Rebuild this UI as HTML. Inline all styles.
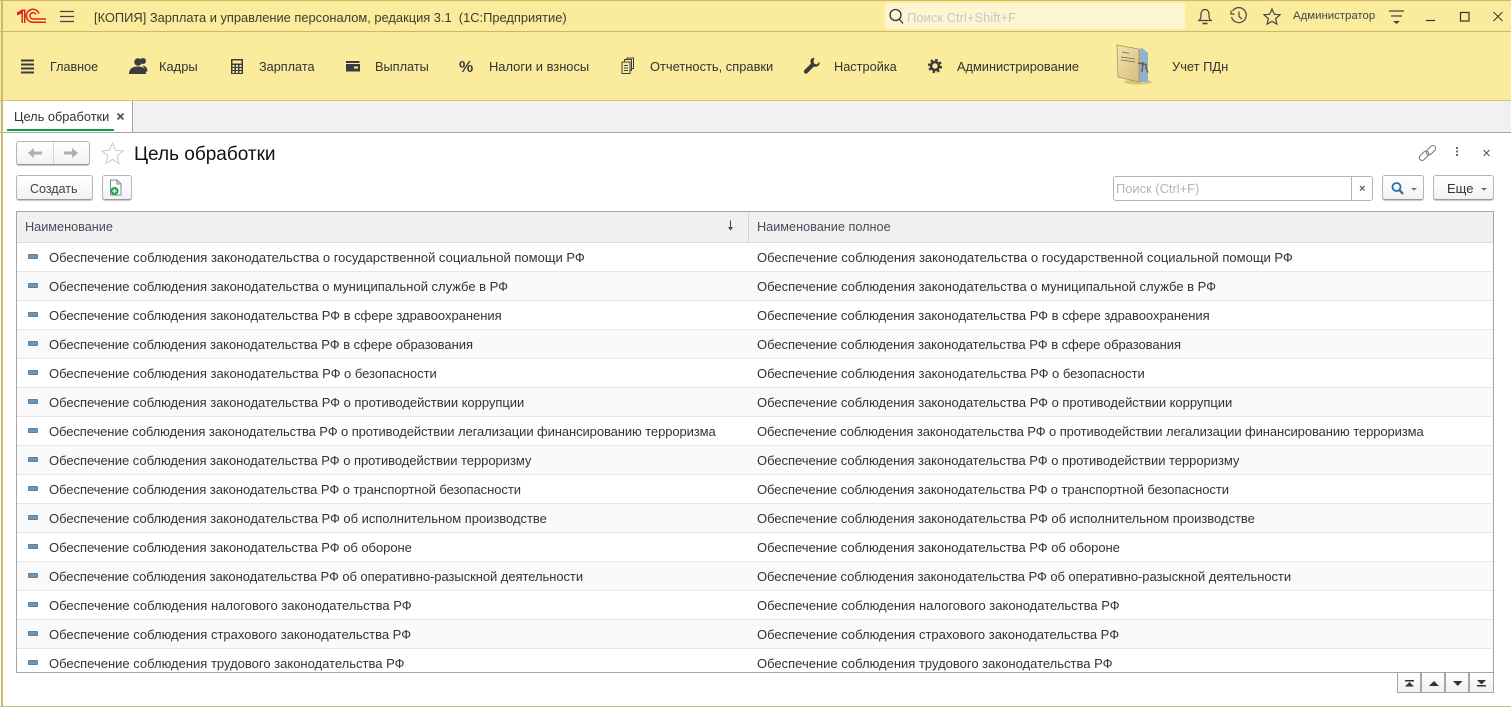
<!DOCTYPE html>
<html lang="ru"><head><meta charset="utf-8"><title>Цель обработки</title>
<style>
*{box-sizing:border-box}
html,body{margin:0;padding:0}
body{width:1511px;height:707px;position:relative;overflow:hidden;background:#fff;font-family:"Liberation Sans",sans-serif;font-size:13px;color:#333}
.a{position:absolute}
.t{position:absolute;white-space:nowrap;line-height:16px;height:16px}
svg{position:absolute;overflow:visible}
.btn{position:absolute;background:linear-gradient(#fff,#f2f2f2);border:1px solid #b5b5b5;border-bottom-color:#999;border-radius:3px;box-shadow:0 1px 0 #ccc}
.row{position:absolute;left:17px;width:1476px;height:29px;border-bottom:1px solid #e6e6e6}
.row.e{background:#fafafa}
.row i{position:absolute;left:11px;top:11px;width:10px;height:5px;background:#6d95b5;border:1px solid #5f7f9c;border-radius:1px}
.row span{position:absolute;top:7px;line-height:16px;white-space:nowrap;color:#333}
.row .c1{left:32px}.row .c2{left:740px}
.nav{position:absolute;top:59px;line-height:16px;white-space:nowrap;color:#333;font-size:12.9px}
.pg{position:absolute;top:672px;height:21px;width:24px;background:linear-gradient(#fff,#f0f0f0);border:1px solid #a5a5a5}
</style></head><body>
<!-- Top -->
<div class="a" style="left:0;top:0;width:1511px;height:32px;background:#fbeb9d;border-top:1px solid #c9bb6a;border-bottom:1px solid #c9bb6a"></div>
<div class="a" style="left:0;top:32px;width:1511px;height:69px;background:#fbeb9d;border-bottom:1px solid #d4c67c"></div>
<div class="a" style="left:0;top:101px;width:1511px;height:32px;background:#f1f1f1;border-bottom:1px solid #a5a5a5"></div>
<div class="a" style="left:1px;top:0;width:2px;height:707px;background:#c9bb6a;z-index:5"></div>
<div class="a" style="left:0;top:706px;width:1511px;height:1px;background:#c9bb6a;z-index:5"></div>
<!-- 1C logo -->
<svg style="left:0;top:0" width="50" height="30" fill="none" stroke="#d8261c">
<path d="M17 12.500L22 9.500H25.500V23H21.500V13.500L17 15.500z" fill="#d8261c" stroke="none"/>
<path d="M23.500 11V23" stroke="#fbeb9d" stroke-width="1"/>
<path d="M46 22.300H33A6.500 6.500 0 1 1 39 13.500" stroke-width="1.500"/>
<path d="M46 19H33A3.200 3.200 0 1 1 36 14.500" stroke-width="1.500"/>
</svg>
<!-- burger -->
<svg style="left:0;top:0" width="80" height="30" stroke="#444" stroke-width="1.200"><path d="M60 11.500H74M60 16.500H74M60 21.500H74"/></svg>
<div class="t" style="left:94px;top:10px;color:#3d3d2e;font-size:12.870px">[КОПИЯ] Зарплата и управление персоналом, редакция 3.1&nbsp; (1С:Предприятие)</div>
<!-- search -->
<div class="a" style="left:885px;top:3px;width:300px;height:26px;background:#fdf6d2;border-radius:3px"></div>
<svg style="left:0;top:0" width="910" height="30" fill="none" stroke="#333" stroke-width="1.300"><circle cx="895.500" cy="15" r="5.500"/><path d="M899.500 19.500L903 23.500"/></svg>
<div class="t" style="left:907px;top:10px;color:#c8c8c8;font-size:13px">Поиск Ctrl+Shift+F</div>
<!-- right tools -->
<svg style="left:0;top:0" width="1511" height="32" fill="none" stroke="#444" stroke-width="1.200">
<path d="M1198 20.500h14M1199.500 20c1.500-1.500 1.500-3 1.500-5.500 0-3 1.500-5 4-5s4 2 4 5c0 2.500 0 4 1.500 5.500"/><path d="M1202.500 23.500h5" stroke-width="1.600"/>
<path d="M1232.500 11a7.500 7.500 0 1 1-1 6" /><path d="M1231 10.500v3.500h3.500M1239 11.500v5l3 2.500"/>
<path d="M1272 9l2.300 5.200 5.700.6-4.300 3.800 1.200 5.600-4.900-2.900-4.900 2.900 1.200-5.600-4.300-3.800 5.700-.6z"/>
<path d="M1389 11h15M1391 16h11"/>
<path d="M1393 21h7l-3.500 3z" fill="#444" stroke="none"/>
<path d="M1426 20.500h9" stroke="#333"/>
<rect x="1460.500" y="12.500" width="8.500" height="8.500" stroke="#333"/>
<path d="M1493.500 12l9 9M1502.500 12l-9 9" stroke="#444"/>
</svg>
<div class="t" style="left:1293px;top:8px;font-size:11.400px;color:#3d4a4a">Администратор</div>
<!-- nav icons -->
<svg style="left:0;top:33px" width="1100" height="68" fill="#3c3c3c">
<path d="M21 27.500h13v2H21zM21 31.500h13v2H21zM21 35.500h13v2H21zM21 39.500h13v2H21z" transform="translate(0 -1)"/>
<circle cx="138" cy="29" r="3.800"/><circle cx="143" cy="28" r="3"/>
<path d="M129 41c0-5 3-7.500 9-7.500s8 2.500 8 7.500zM142 32.500c3 0 5.500 2 5.500 6h-2c-.5-3-1.500-4.500-3.500-6z"/>
<path fill-rule="evenodd" d="M231 27h12v15h-12zM232.500 28.500v3h9v-3zM232.500 33v2h2v-2zM236 33v2h2v-2zM239.500 33v2h2v-2zM232.500 36v2h2v-2zM236 36v2h2v-2zM239.500 36v2h2v-2zM232.500 39v2h2v-2zM236 39v2h2v-2zM239.500 39v2h2v-2z" transform="translate(0 -1)"/>
<path fill-rule="evenodd" d="M346 29h13.500v2H346zM346 32h14v7.500h-14zM354 34.500v2h4v-2z" transform="translate(0 -1)"/>
<path d="M811 26c-2.500-.5-4.500 1.500-4 4l.5 1.500-6.500 6.500c-.8 1-.8 2 0 3s2 1 3 0l6.500-6.500c3 1 6-1 5.500-4.500l-3 2.500-2.500-1 -.5-2.500z" transform="translate(3.500 -1)"/>
<g fill="none" stroke="#3c3c3c"><circle cx="935" cy="33" r="6" stroke-width="2.200" stroke-dasharray="2.400 2.312"/><circle cx="935" cy="33" r="4" stroke-width="2.600"/></g>
<g fill="none" stroke="#3c3c3c" stroke-width="1" transform="translate(0 -1.500)"><path d="M622 30.500h8v11.500h-8zM624.500 30v-2h7v11h-1.500M627 28v-1.500h6.500V37h-2M624 34h4M624 36.500h4M624 39h4"/></g>
</svg>
<div class="t" style="left:459px;top:59px;font-size:16px;font-weight:bold;color:#3c3c3c;height:18px;line-height:18px">%</div>
<div class="nav" style="left:50px;font-size:12.600px">Главное</div>
<div class="nav" style="left:159px">Кадры</div>
<div class="nav" style="left:259px;font-size:12.700px">Зарплата</div>
<div class="nav" style="left:375px;font-size:12.750px">Выплаты</div>
<div class="nav" style="left:489px">Налоги и взносы</div>
<div class="nav" style="left:650px">Отчетность, справки</div>
<div class="nav" style="left:834px;font-size:12.750px">Настройка</div>
<div class="nav" style="left:957px;font-size:12.800px">Администрирование</div>
<div class="nav" style="left:1172px">Учет ПДн</div>
<!-- book -->
<svg style="left:1110px;top:40px" width="50" height="50">
<defs><linearGradient id="b" x1="0" x2="1" y1="0" y2="1"><stop offset="0" stop-color="#f3e3b4"/><stop offset="1" stop-color="#d8bd7d"/></linearGradient></defs>
<ellipse cx="28" cy="42" rx="14" ry="2.500" fill="#bfae66" opacity=".6"/>
<path d="M29 9l3-1 6 5v29H29z" fill="#8fb3cc"/>
<path d="M7 5l22 4v33L8 37z" fill="url(#b)" stroke="#a98a50" stroke-width=".7"/>
<path d="M12 12l7 1.200M11 17l14 2M11 20l14 2" stroke="#7b6a45" stroke-width=".8"/>
<path d="M28 23l8 1.500v4l2 4M33 22l-1 10" stroke="#6b5330" stroke-width="1.300" fill="none"/>
</svg>
<!-- tab -->
<div class="a" style="left:3px;top:101px;width:130px;height:32px;background:#fff;border-right:1px solid #a5a5a5;border-bottom:1px solid #a5a5a5"></div>
<div class="t" style="left:14px;top:109px;color:#333;font-size:12.800px">Цель обработки</div>
<svg style="left:0;top:100px" width="130" height="30" stroke="#555" stroke-width="1.800"><path d="M117.500 13.500l6 6M123.500 13.500l-6 6"/></svg>
<div class="a" style="left:7px;top:129px;width:107px;height:2px;background:#0f9b4a"></div>
<!-- Title row -->
<div class="btn" style="left:16px;top:141px;width:74px;height:24px"></div>
<div class="a" style="left:53px;top:142px;width:1px;height:22px;background:#d5d5d5"></div>
<svg style="left:0;top:140px" width="100" height="26" fill="#b0b0b0"><path d="M28 13l6-5v3.500h8v3h-8V18zM78 13l-6-5v3.500h-8v3h8V18z"/></svg>
<svg style="left:0;top:140px" width="130" height="30" fill="none" stroke="#c8ccd0" stroke-width="1"><path d="M112.500 3l3 7.300 7.500.6-5.800 5 1.800 7.600-6.500-4.100-6.500 4.100 1.800-7.600-5.800-5 7.500-.6z"/></svg>
<div class="t" style="left:134px;top:144px;height:22px;line-height:22px;font-size:19px;color:#111">Цель обработки</div>
<svg style="left:0;top:135px" width="1511" height="36" fill="none">
<g stroke="#777" stroke-width="1"><rect x="1425.500" y="12.500" width="11" height="5.500" rx="2.750" transform="rotate(-45 1431 15.250)" /><rect x="1418.500" y="18" width="11" height="5.500" rx="2.750" transform="rotate(-45 1424 20.750)"/></g>
<path d="M1456 12h2v2h-2zM1456 15.500h2v2h-2zM1456 19h2v2h-2z" fill="#666"/>
<path d="M1483.500 15l6 6M1489.500 15l-6 6" stroke="#555"/></svg>
<!-- Toolbar -->
<div class="btn" style="left:16px;top:175px;width:77px;height:25px"></div>
<div class="t" style="left:30px;top:181px;color:#444;font-size:12.500px">Создать</div>
<div class="btn" style="left:102px;top:175px;width:30px;height:25px"></div>
<svg style="left:100px;top:174px" width="34" height="28">
<path d="M10.500 6h6.500l4 4v11H10.500z" fill="#fff" stroke="#7d8a99"/><path d="M17 6v4h4" fill="none" stroke="#7d8a99"/>
<circle cx="14.500" cy="17" r="4" fill="#22a344"/><path d="M12.300 17h4.400M14.500 14.800v4.400" stroke="#fff" stroke-width="1.200"/></svg>
<div class="a" style="left:1113px;top:176px;width:260px;height:25px;background:#fff;border:1px solid #b5b5b5;border-radius:3px"></div>
<div class="a" style="left:1351px;top:177px;width:1px;height:23px;background:#b5b5b5"></div>
<div class="t" style="left:1116px;top:181px;color:#b4b4b4;font-size:12.900px">Поиск (Ctrl+F)</div>
<svg style="left:1350px;top:176px" width="24" height="25" stroke="#555" stroke-width="1.200"><path d="M10 10l4.500 4.500M14.500 10L10 14.500"/></svg>
<div class="btn" style="left:1382px;top:175px;width:42px;height:25px"></div>
<svg style="left:1382px;top:175px" width="42" height="25" fill="none"><circle cx="14.500" cy="12" r="4" stroke="#2f6ea5" stroke-width="1.800"/><path d="M17.500 15l3.500 4" stroke="#2f6ea5" stroke-width="2.200"/><path d="M29 13h6l-3 2.500z" fill="#666"/></svg>
<div class="btn" style="left:1433px;top:175px;width:61px;height:25px"></div>
<div class="t" style="left:1447px;top:181px;font-size:13px;color:#333">Еще</div>
<svg style="left:1433px;top:175px" width="61" height="25"><path d="M48 13h6l-3 2.500z" fill="#666"/></svg>
<!-- Table -->
<div class="a" style="left:16px;top:211px;width:1478px;height:462px;border:1px solid #a5a5a5;overflow:hidden;background:#fff"></div>
<div class="a" style="left:17px;top:212px;width:1476px;height:31px;background:#f0f0f0;border-bottom:1px solid #dcdcdc"></div>
<div class="a" style="left:748px;top:212px;width:1px;height:30px;background:#d5d5d5"></div>
<div class="t" style="left:25px;top:219px;color:#4a4a5a;font-size:12.700px">Наименование</div>
<div class="t" style="left:757px;top:219px;color:#4a4a5a;font-size:12.700px">Наименование полное</div>
<svg style="left:720px;top:214px" width="20" height="24" stroke="#444" fill="none"><path d="M10.500 6.500v9" /><path d="M8 13l2.500 3.500L13 13z" fill="#444" stroke="none"/></svg>
<div class="row" style="top:243px"><i></i><span class="c1">Обеспечение соблюдения законодательства о государственной социальной помощи РФ</span><span class="c2">Обеспечение соблюдения законодательства о государственной социальной помощи РФ</span></div>
<div class="row e" style="top:272px;letter-spacing:-.015px"><i></i><span class="c1">Обеспечение соблюдения законодательства о муниципальной службе в РФ</span><span class="c2">Обеспечение соблюдения законодательства о муниципальной службе в РФ</span></div>
<div class="row" style="top:301px;letter-spacing:-.03px"><i></i><span class="c1">Обеспечение соблюдения законодательства РФ в сфере здравоохранения</span><span class="c2">Обеспечение соблюдения законодательства РФ в сфере здравоохранения</span></div>
<div class="row e" style="top:330px;letter-spacing:-.04px"><i></i><span class="c1">Обеспечение соблюдения законодательства РФ в сфере образования</span><span class="c2">Обеспечение соблюдения законодательства РФ в сфере образования</span></div>
<div class="row" style="top:359px;letter-spacing:-.02px"><i></i><span class="c1">Обеспечение соблюдения законодательства РФ о безопасности</span><span class="c2">Обеспечение соблюдения законодательства РФ о безопасности</span></div>
<div class="row e" style="top:388px;letter-spacing:-.03px"><i></i><span class="c1">Обеспечение соблюдения законодательства РФ о противодействии коррупции</span><span class="c2">Обеспечение соблюдения законодательства РФ о противодействии коррупции</span></div>
<div class="row" style="top:417px;letter-spacing:-.09px"><i></i><span class="c1">Обеспечение соблюдения законодательства РФ о противодействии легализации финансированию терроризма</span><span class="c2">Обеспечение соблюдения законодательства РФ о противодействии легализации финансированию терроризма</span></div>
<div class="row e" style="top:446px;letter-spacing:-.04px"><i></i><span class="c1">Обеспечение соблюдения законодательства РФ о противодействии терроризму</span><span class="c2">Обеспечение соблюдения законодательства РФ о противодействии терроризму</span></div>
<div class="row" style="top:475px;letter-spacing:-.05px"><i></i><span class="c1">Обеспечение соблюдения законодательства РФ о транспортной безопасности</span><span class="c2">Обеспечение соблюдения законодательства РФ о транспортной безопасности</span></div>
<div class="row e" style="top:504px;letter-spacing:-.035px"><i></i><span class="c1">Обеспечение соблюдения законодательства РФ об исполнительном производстве</span><span class="c2">Обеспечение соблюдения законодательства РФ об исполнительном производстве</span></div>
<div class="row" style="top:533px;letter-spacing:-.04px"><i></i><span class="c1">Обеспечение соблюдения законодательства РФ об обороне</span><span class="c2">Обеспечение соблюдения законодательства РФ об обороне</span></div>
<div class="row e" style="top:562px;letter-spacing:-.06px"><i></i><span class="c1">Обеспечение соблюдения законодательства РФ об оперативно-разыскной деятельности</span><span class="c2">Обеспечение соблюдения законодательства РФ об оперативно-разыскной деятельности</span></div>
<div class="row" style="top:591px"><i></i><span class="c1">Обеспечение соблюдения налогового законодательства РФ</span><span class="c2">Обеспечение соблюдения налогового законодательства РФ</span></div>
<div class="row e" style="top:620px"><i></i><span class="c1">Обеспечение соблюдения страхового законодательства РФ</span><span class="c2">Обеспечение соблюдения страхового законодательства РФ</span></div>
<div class="row" style="top:649px;height:23px;border-bottom:0"><i></i><span class="c1">Обеспечение соблюдения трудового законодательства РФ</span><span class="c2">Обеспечение соблюдения трудового законодательства РФ</span></div>
<!-- pager -->
<div class="pg" style="left:1397px"></div><div class="pg" style="left:1421px"></div><div class="pg" style="left:1445px"></div><div class="pg" style="left:1469px;width:25px"></div>
<svg style="left:1397px;top:672px" width="97" height="21" fill="#333">
<path d="M8 8h9v1.500H8zM12.500 10l4.500 4.500H8z"/>
<path d="M37 9l5 5H32z"/>
<path d="M56 9h9.500l-4.750 5z"/>
<path d="M80 8h9l-4.500 4.500zM80 13h9v1.500h-9z"/>
</svg>
</body></html>
